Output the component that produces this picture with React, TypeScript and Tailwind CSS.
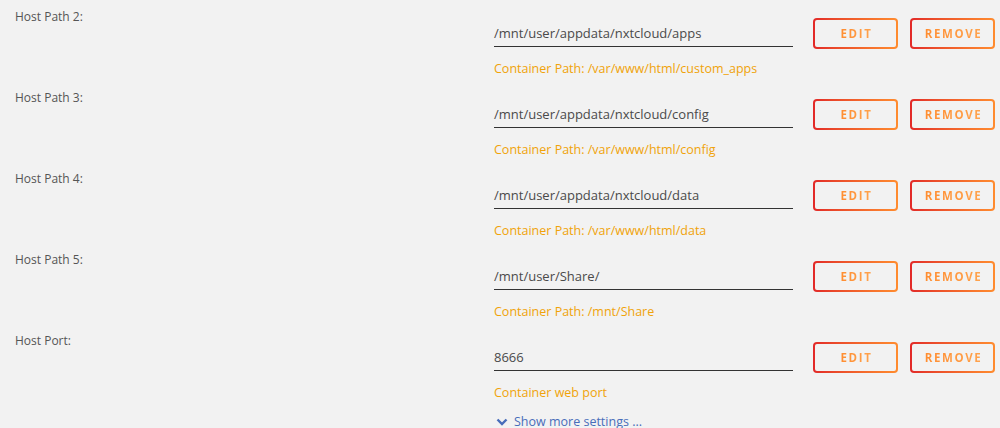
const rows = [
  { label: 'Host Path 2:', value: '/mnt/user/appdata/nxtcloud/apps', note: 'Container Path: /var/www/html/custom_apps' },
  { label: 'Host Path 3:', value: '/mnt/user/appdata/nxtcloud/config', note: 'Container Path: /var/www/html/config' },
  { label: 'Host Path 4:', value: '/mnt/user/appdata/nxtcloud/data', note: 'Container Path: /var/www/html/data' },
  { label: 'Host Path 5:', value: '/mnt/user/Share/', note: 'Container Path: /mnt/Share' },
  { label: 'Host Port:', value: '8666', note: 'Container web port' },
];

function GradientButton({ text }: { text: string }) {
  return (
    <div className="w-[85px] h-[31px] rounded-[4px] p-[2px] bg-gradient-to-r from-[#e22828] to-[#ff8c2f]">
      <div className="w-full h-full rounded-[2px] bg-[#f2f2f2] flex items-center justify-center">
        <span className="text-[11.5px] font-bold tracking-[1.6px] pl-[2px] bg-gradient-to-r from-[#ff8c2f] to-[#ffa34d] bg-clip-text text-transparent">
          {text}
        </span>
      </div>
    </div>
  );
}

export default function App() {
  return (
    <div
      className="w-[1000px] h-[428px] overflow-hidden bg-[#f2f2f2]"
      style={{ fontFamily: '"Open Sans", "Noto Sans", sans-serif' }}
    >
      {rows.map((row, i) => (
        <div key={row.label} className="flex h-[81px]">
          {/* Подпись слева */}
          <div className="w-[494px] pl-[15px] pt-[9px] text-[12px] leading-[16px] text-[#555]">
            {row.label}
          </div>

          {/* Поле ввода и подсказка */}
          <div className="w-[299px] pt-[16px]">
            <div className="h-[31px] pt-[9px] border-b border-[#333] text-[13px] leading-[16px] text-[#4a4a4a]">
              {row.value}
            </div>
            <div className="mt-[14px] text-[12.5px] leading-[16px] text-[#f0a30a]">{row.note}</div>
            {i === rows.length - 1 && (
              <div className="mt-[13px] flex items-center gap-[6px] text-[12.5px] leading-[16px] text-[#486dba]">
                <svg width="12" height="8" viewBox="0 0 12 8" className="ml-[2px]">
                  <path d="M1.5 1.5 L6 6 L10.5 1.5" fill="none" stroke="#486dba" strokeWidth="2.4" />
                </svg>
                <span>Show more settings ...</span>
              </div>
            )}
          </div>

          {/* Кнопки */}
          <div className="flex gap-[12px] ml-[20px] pt-[18px]">
            <GradientButton text="EDIT" />
            <GradientButton text="REMOVE" />
          </div>
        </div>
      ))}
    </div>
  );
}
